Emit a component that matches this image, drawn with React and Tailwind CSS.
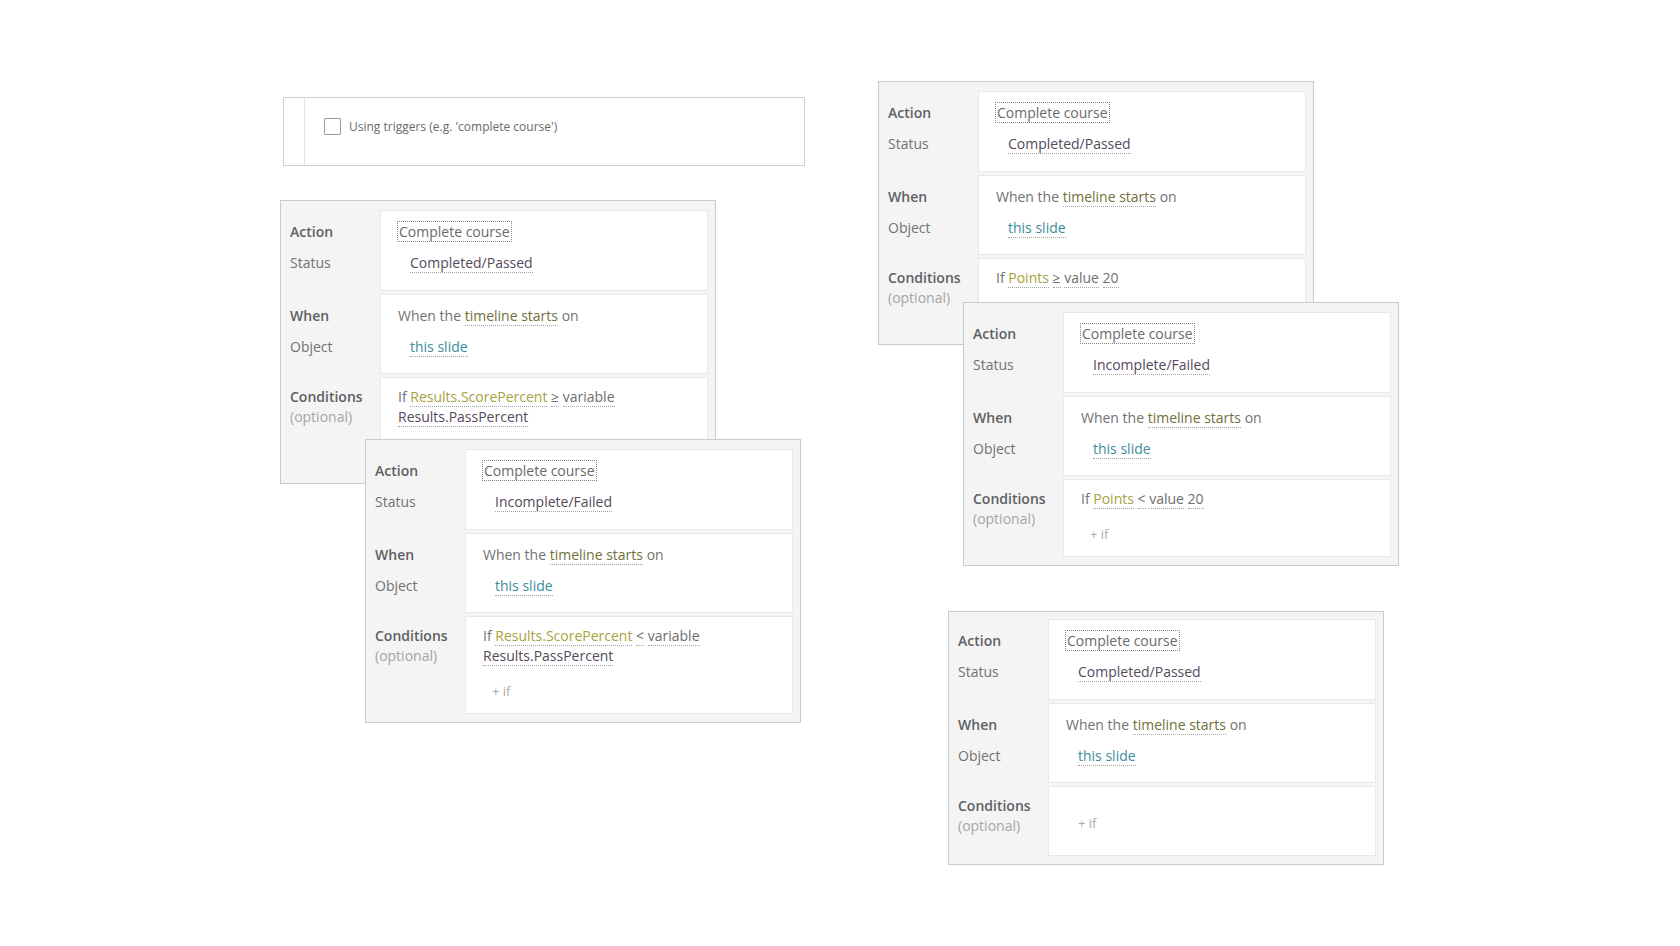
import React from "react";

// dotted-underlined value token, like the picker links in the trigger editor
const Tok = ({ c = "text-[#6e6e6e]", children }) => (
  <span className={`${c} border-b border-dotted border-[#a3a3a3]`}>{children}</span>
);

const cards = [
  {
    pos: "left-[280px] top-[200px] z-10 pt-[9px]",
    status: "Completed/Passed",
    cond: [
      [
        <>If </>,
        <Tok c="text-[#a9a23c]">Results.ScorePercent</Tok>,
        <> </>,
        <Tok>≥</Tok>,
        <> </>,
        <Tok>variable</Tok>,
      ],
      [<Tok c="text-[#56495c]">Results.PassPercent</Tok>],
    ],
    plusIf: true,
  },
  {
    pos: "left-[365px] top-[439px] z-20 pt-[9px]",
    status: "Incomplete/Failed",
    cond: [
      [
        <>If </>,
        <Tok c="text-[#a9a23c]">Results.ScorePercent</Tok>,
        <> </>,
        <Tok>&lt;</Tok>,
        <> </>,
        <Tok>variable</Tok>,
      ],
      [<Tok c="text-[#56495c]">Results.PassPercent</Tok>],
    ],
    plusIf: true,
  },
  {
    pos: "left-[878px] top-[81px] z-10 pt-[9px]",
    status: "Completed/Passed",
    cond: [
      [
        <>If </>,
        <Tok c="text-[#a9a23c]">Points</Tok>,
        <> </>,
        <Tok>≥</Tok>,
        <> </>,
        <Tok>value</Tok>,
        <> </>,
        <Tok>20</Tok>,
      ],
    ],
    plusIf: true,
  },
  {
    pos: "left-[963px] top-[302px] z-20 pt-[9px]",
    status: "Incomplete/Failed",
    cond: [
      [
        <>If </>,
        <Tok c="text-[#a9a23c]">Points</Tok>,
        <> </>,
        <Tok>&lt;</Tok>,
        <> </>,
        <Tok>value</Tok>,
        <> </>,
        <Tok>20</Tok>,
      ],
    ],
    plusIf: true,
  },
  {
    pos: "left-[948px] top-[611px] z-10 pt-[7px]",
    status: "Completed/Passed",
    cond: [],
    plusIf: true,
  },
];

const TriggerCard = ({ card }) => {
  const empty = card.cond.length === 0;
  return (
    <div
      className={`absolute ${card.pos} w-[436px] border border-[#cacaca] bg-[#f4f4f4] pr-[7px] pb-[8px] flex flex-col gap-[3px]`}
    >
      {/* Action / Status */}
      <div className="flex">
        <div className="w-[99px] shrink-0 pl-[9px] pt-[6px] leading-[31px] text-[#727272]">
          <div className="font-semibold text-[#5e6062]">Action</div>
          <div>Status</div>
        </div>
        <div className="flex-1 bg-white border border-[#e9e9e9] pl-[16px] pt-[5px] pb-[12px] leading-[31px]">
          <div>
            <span className="border border-dotted border-[#858585] px-[1px] text-[#6a6a6a]">
              Complete course
            </span>
          </div>
          <div className="pl-[13px]">
            <Tok c="text-[#56495c]">{card.status}</Tok>
          </div>
        </div>
      </div>

      {/* When / Object */}
      <div className="flex">
        <div className="w-[99px] shrink-0 pl-[9px] pt-[6px] leading-[31px] text-[#727272]">
          <div className="font-semibold text-[#5e6062]">When</div>
          <div>Object</div>
        </div>
        <div className="flex-1 bg-white border border-[#e9e9e9] pl-[17px] pt-[5px] pb-[11px] leading-[31px] text-[#727272]">
          <div>
            When the <Tok c="text-[#72703c]">timeline starts</Tok> on
          </div>
          <div className="pl-[12px]">
            <Tok c="text-[#3d8b9d]">this slide</Tok>
          </div>
        </div>
      </div>

      {/* Conditions */}
      <div className="flex">
        <div className="w-[99px] shrink-0 pl-[9px] pt-[10px] leading-[20px]">
          <div className="font-semibold text-[#5e6062]">Conditions</div>
          <div className="text-[#a5a5a5]">(optional)</div>
        </div>
        <div
          className={`flex-1 bg-white border border-[#e9e9e9] pl-[17px] leading-[20px] text-[#727272] ${
            empty ? "pt-[26px] pb-[22px]" : "pt-[9px] pb-[12px]"
          }`}
        >
          {card.cond.map((line, i) => (
            <div key={i}>
              {line.map((part, j) => (
                <React.Fragment key={j}>{part}</React.Fragment>
              ))}
            </div>
          ))}
          {card.plusIf && (
            <div className={`${empty ? "pl-[12px]" : "mt-[15px] pl-[9px]"} text-[13px] text-[#ababab]`}>
              + if
            </div>
          )}
        </div>
      </div>
    </div>
  );
};

export default function App() {
  return (
    <div className="relative w-[1680px] h-[946px] bg-white overflow-hidden font-['Open_Sans','Noto_Sans',sans-serif] text-[14px]">
      {/* completion option box */}
      <div className="absolute left-[283px] top-[97px] w-[522px] h-[69px] border border-[#cfcfcf] bg-white flex">
        <div className="w-[21px] border-r border-[#e2e2e2]" />
        <div className="flex items-center pl-[19px] pb-[10px] gap-[8px]">
          <span className="w-[17px] h-[17px] border border-[#9c9c9c] rounded-[1px] bg-white" />
          <span className="text-[12px] text-[#6a6a6a]">Using triggers (e.g. 'complete course')</span>
        </div>
      </div>

      {cards.map((card, i) => (
        <TriggerCard key={i} card={card} />
      ))}
    </div>
  );
}
